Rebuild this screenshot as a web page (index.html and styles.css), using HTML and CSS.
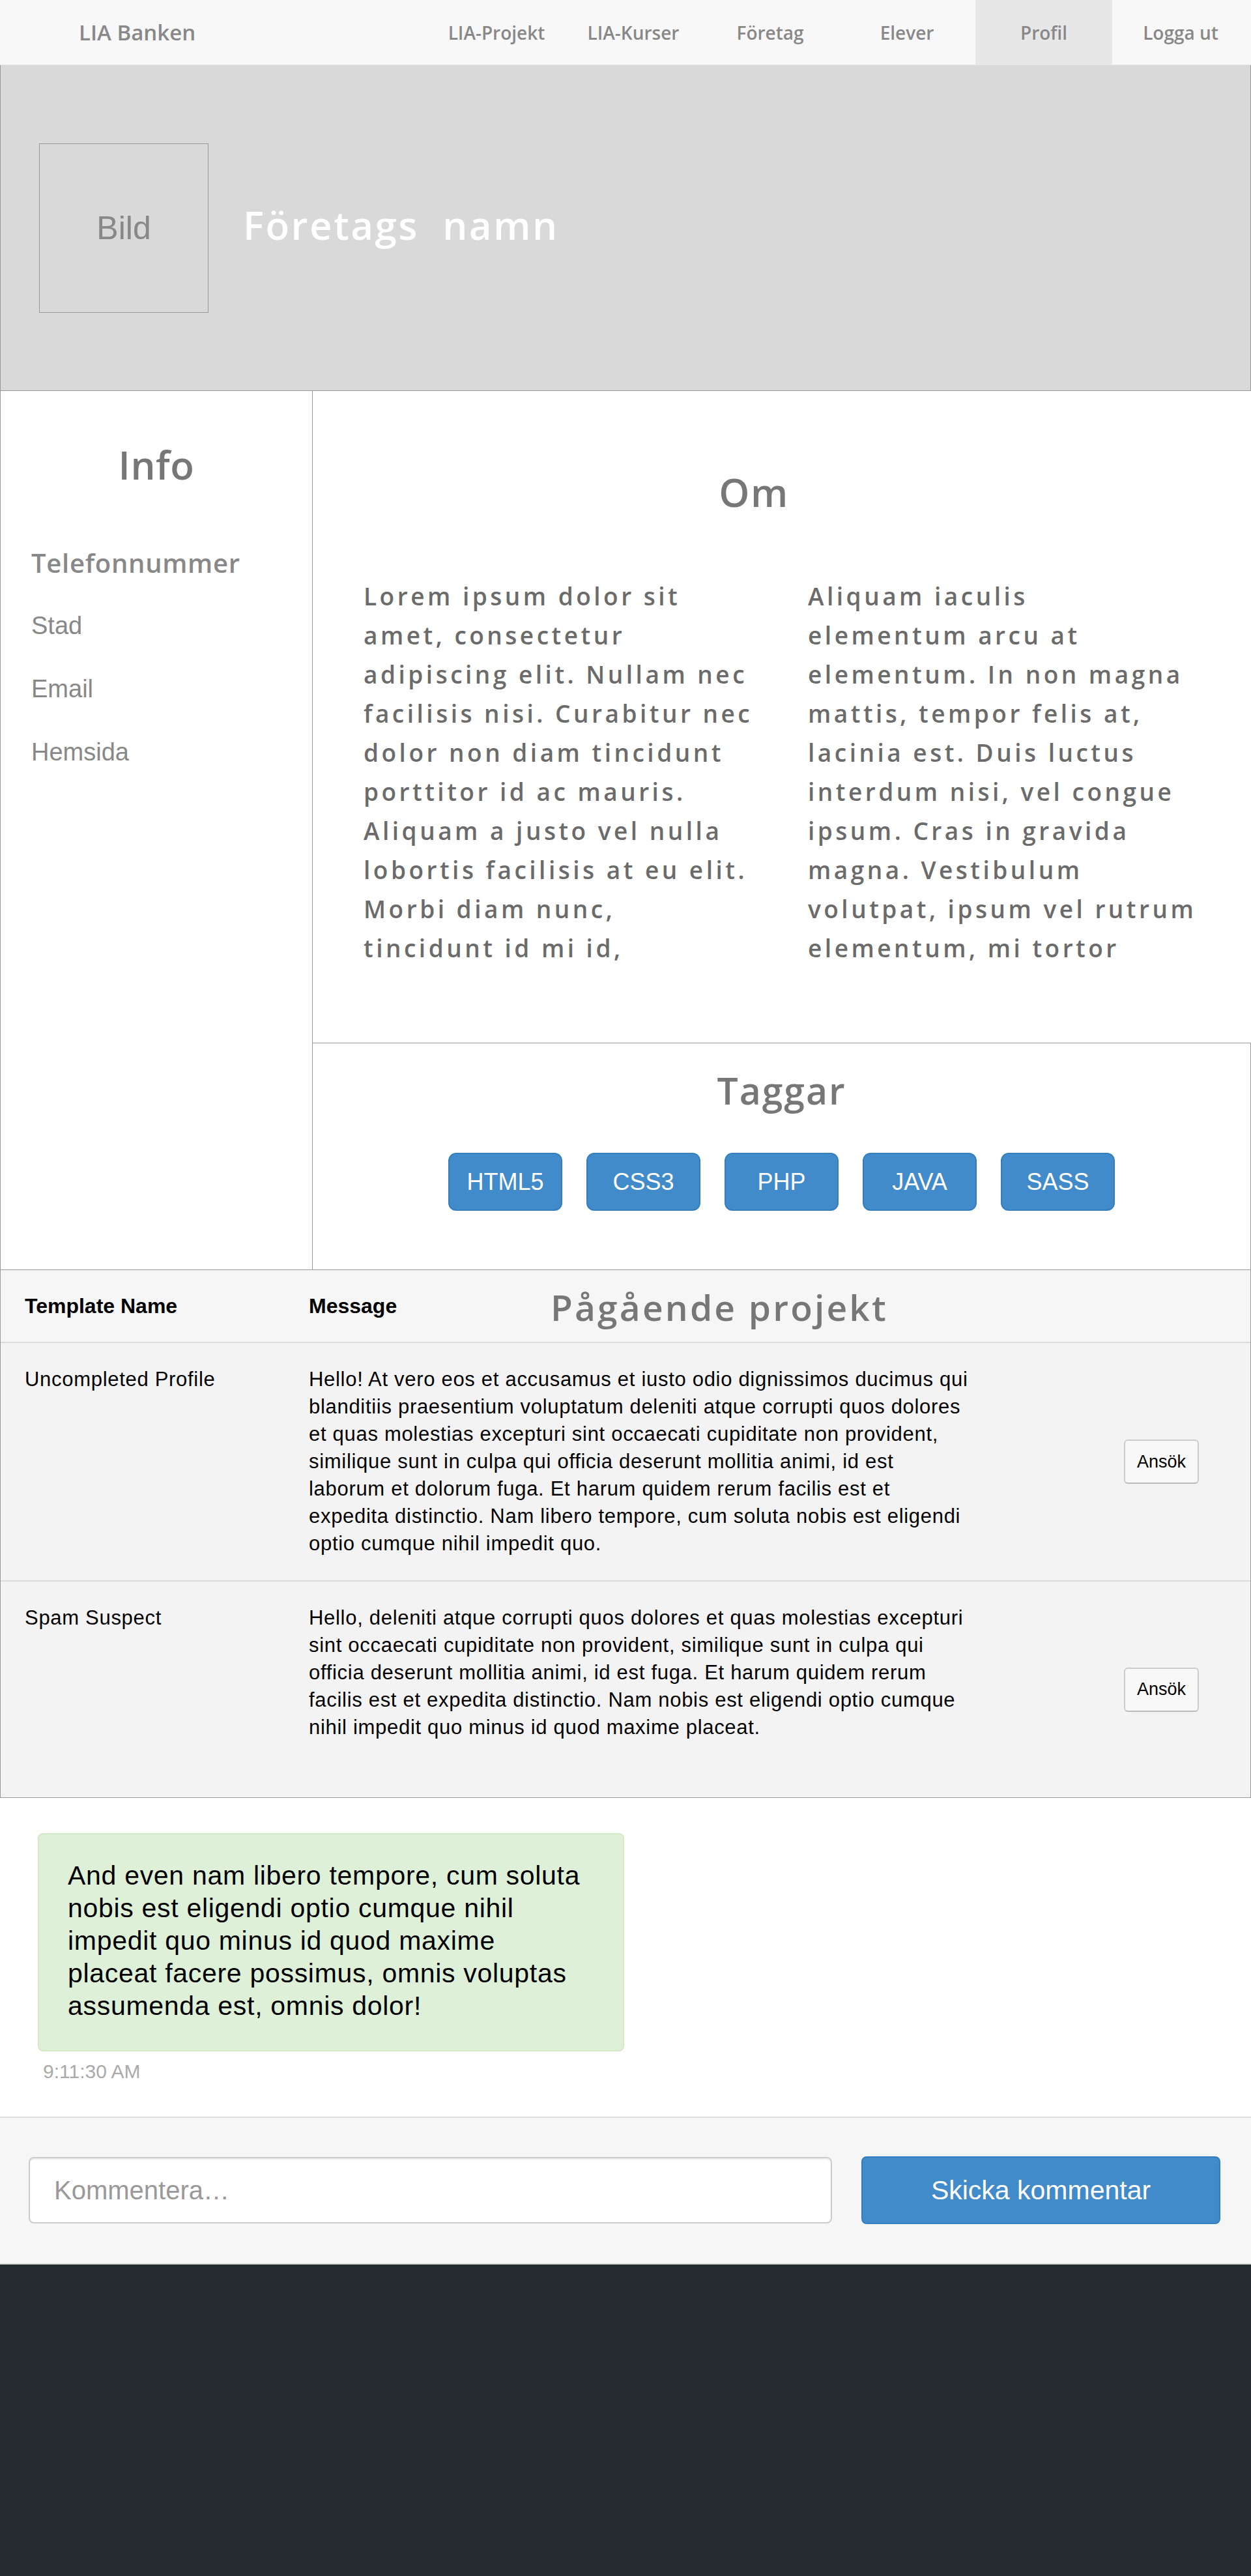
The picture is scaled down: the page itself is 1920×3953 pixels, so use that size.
FILE: index.html
```html
<!DOCTYPE html>
<html lang="sv">
<head>
<meta charset="utf-8">
<title>LIA Banken – Profil</title>
<link rel="stylesheet" href="styles.css">
</head>
<body>
<nav class="nav">
  <div class="brand">LIA Banken</div>
  <ul class="menu">
    <li>LIA-Projekt</li>
    <li>LIA-Kurser</li>
    <li>Företag</li>
    <li>Elever</li>
    <li class="active">Profil</li>
    <li>Logga ut</li>
  </ul>
</nav>

<header class="hero">
  <div class="pic">Bild</div>
  <h1 class="company">Företags  namn</h1>
</header>

<main class="main">
  <aside class="info">
    <h2 class="info-title">Info</h2>
    <ul class="info-list">
      <li class="info-strong">Telefonnummer</li>
      <li>Stad</li>
      <li>Email</li>
      <li>Hemsida</li>
    </ul>
  </aside>
  <div class="right">
    <section class="about">
      <h2 class="om-title">Om</h2>
      <div class="cols">
        <p>Lorem ipsum dolor sit<br>amet, consectetur<br>adipiscing elit. Nullam nec<br>facilisis nisi. Curabitur nec<br>dolor non diam tincidunt<br>porttitor id ac mauris.<br>Aliquam a justo vel nulla<br>lobortis facilisis at eu elit.<br>Morbi diam nunc,<br>tincidunt id mi id,</p>
        <p>Aliquam iaculis<br>elementum arcu at<br>elementum. In non magna<br>mattis, tempor felis at,<br>lacinia est. Duis luctus<br>interdum nisi, vel congue<br>ipsum. Cras in gravida<br>magna. Vestibulum<br>volutpat, ipsum vel rutrum<br>elementum, mi tortor</p>
      </div>
    </section>
    <section class="tags">
      <h2 class="tags-title">Taggar</h2>
      <div class="tag-list">
        <span class="tag">HTML5</span>
        <span class="tag">CSS3</span>
        <span class="tag">PHP</span>
        <span class="tag">JAVA</span>
        <span class="tag">SASS</span>
      </div>
    </section>
  </div>
</main>

<section class="projects">
  <div class="thead">
    <div class="th th1">Template Name</div>
    <div class="th th2">Message</div>
    <h2 class="proj-title">Pågående projekt</h2>
  </div>
  <div class="row">
    <div class="cell1">Uncompleted Profile</div>
    <div class="cell2">Hello! At vero eos et accusamus et iusto odio dignissimos ducimus qui<br>blanditiis praesentium voluptatum deleniti atque corrupti quos dolores<br>et quas molestias excepturi sint occaecati cupiditate non provident,<br>similique sunt in culpa qui officia deserunt mollitia animi, id est<br>laborum et dolorum fuga. Et harum quidem rerum facilis est et<br>expedita distinctio. Nam libero tempore, cum soluta nobis est eligendi<br>optio cumque nihil impedit quo.</div>
    <button class="apply">Ansök</button>
  </div>
  <div class="row last">
    <div class="cell1">Spam Suspect</div>
    <div class="cell2">Hello, deleniti atque corrupti quos dolores et quas molestias excepturi<br>sint occaecati cupiditate non provident, similique sunt in culpa qui<br>officia deserunt mollitia animi, id est fuga. Et harum quidem rerum<br>facilis est et expedita distinctio. Nam nobis est eligendi optio cumque<br>nihil impedit quo minus id quod maxime placeat.</div>
    <button class="apply">Ansök</button>
  </div>
</section>

<section class="chat">
  <div class="bubble">And even nam libero tempore, cum soluta<br>nobis est eligendi optio cumque nihil<br>impedit quo minus id quod maxime<br>placeat facere possimus, omnis voluptas<br>assumenda est, omnis dolor!</div>
  <div class="time">9:11:30 AM</div>
</section>

<section class="comment">
  <input class="comment-input" type="text" placeholder="Kommentera…">
  <button class="send">Skicka kommentar</button>
</section>

<footer class="footer"></footer>
</body>
</html>
```
FILE: styles.css
```css
* { box-sizing: border-box; margin: 0; padding: 0; }
body { width: 1920px; background: #fff; font-family: "Liberation Sans", Arial, sans-serif; color: #000; }

/* nav */
.nav { height: 100px; background: #f8f8f8; border-bottom: 1px solid #e7e7e7; display: flex; padding-right: 3px; }
.brand { font-family: "Open Sans", sans-serif; font-weight: 600; font-size: 33px; color: #888; display: flex; align-items: center; padding-left: 121px; }
.menu { margin-left: auto; display: flex; list-style: none; }
.menu li { width: 210px; display: flex; align-items: center; justify-content: center; font-family: "Open Sans", sans-serif; font-weight: 600; font-size: 28px; color: #888; }
.menu li.active { background: #e7e7e7; }

/* hero */
.hero { height: 500px; background: #d9d9d9; border: 1px solid #999; border-top: 0; display: flex; align-items: center; padding-left: 59px; }
.pic { width: 260px; height: 260px; border: 1px solid #999; display: flex; align-items: center; justify-content: center; font-size: 50px; color: #888; }
.company { margin-left: 53px; margin-bottom: 10px; font-family: "Open Sans", sans-serif; font-weight: 600; font-size: 60px; line-height: 60px; color: #fff; letter-spacing: 2.5px; white-space: pre; }

/* main */
.main { display: flex; }
.info { width: 480px; border-left: 1px solid #999; border-right: 1px solid #999; border-bottom: 1px solid #999; padding-top: 83px; }
.info-title { font-family: "Open Sans", sans-serif; font-weight: 600; font-size: 60px; line-height: 60px; color: #777; text-align: center; margin-bottom: 72px; letter-spacing: 0.5px; }
.info-list { list-style: none; padding-left: 47px; }
.info-list li { height: 97px; line-height: 97px; font-size: 38px; color: #888; }
.info-list li.info-strong { font-family: "Open Sans", sans-serif; font-weight: 600; font-size: 40px; letter-spacing: 0.7px; }

.right { flex: 1; display: flex; flex-direction: column; }
.about { height: 1000px; padding: 125px 0 0 78px; }
.om-title { font-family: "Open Sans", sans-serif; font-weight: 600; font-size: 60px; line-height: 60px; color: #777; text-align: center; padding-right: 164px; margin-bottom: 100px; letter-spacing: 1.5px; }
.cols { display: grid; grid-template-columns: 682px auto; }
.cols p { font-family: "Open Sans", sans-serif; font-weight: 600; font-size: 37px; line-height: 60px; color: #6b6b6b; letter-spacing: 4.5px; white-space: nowrap; }

.tags { height: 349px; border: 1px solid #999; border-left: 0; padding-top: 44px; text-align: center; }
.tags-title { font-family: "Open Sans", sans-serif; font-weight: 600; font-size: 57px; line-height: 57px; color: #777; margin-bottom: 67px; letter-spacing: 2px; }
.tag-list { display: flex; justify-content: center; gap: 37px; }
.tag { width: 175px; height: 89px; background: #428bca; border: 2px solid #357ebd; border-radius: 12px; color: #fff; font-size: 36px; display: flex; align-items: center; justify-content: center; }

/* projects */
.projects { border: 1px solid #999; border-top: 0; }
.thead { height: 112px; background: #f6f6f6; border-bottom: 2px solid #ddd; display: flex; align-items: center; padding-left: 37px; }
.th { font-weight: 700; font-size: 32px; }
.th1 { width: 436px; }
.th2 { width: 371px; }
.proj-title { font-family: "Open Sans", sans-serif; font-weight: 600; font-size: 55px; line-height: 55px; color: #777; margin-top: 2px; letter-spacing: 3.2px; }
.row { display: flex; align-items: flex-start; background: #f3f3f3; padding: 35px 0 35px 37px; border-bottom: 2px solid #ddd; font-size: 31px; line-height: 42px; letter-spacing: 0.7px; }
.row.last { border-bottom: 0; min-height: 331px; }
.cell1 { width: 436px; }
.cell2 { width: 1120px; white-space: nowrap; }
.apply { align-self: center; margin-left: auto; margin-right: 79px; width: 115px; height: 68px; background: #f8f8f8; border: 2px solid #ccc; border-bottom-color: #bbb; border-radius: 6px; font-family: "Liberation Sans", Arial, sans-serif; font-size: 27px; color: #000; }

/* chat */
.chat { padding: 54px 0 51px 58px; }
.bubble { width: 900px; background: #dff0d8; border: 2px solid #d6e9c6; border-radius: 8px; padding: 38px 44px 43px; font-size: 41px; line-height: 50px; letter-spacing: 0.7px; white-space: nowrap; color: #000; }
.time { margin-top: 13px; padding-left: 8px; font-size: 30px; line-height: 36px; color: #aaa; }

/* comment */
.comment { background: #f6f6f6; border-top: 2px solid #ddd; border-bottom: 2px solid #ddd; padding: 59px 0 60px 44px; display: flex; align-items: center; }
.comment-input { width: 1233px; height: 102px; background: #fff; border: 2px solid #ccc; border-radius: 8px; box-shadow: inset 0 2px 2px rgba(0,0,0,0.075); padding-left: 37px; font-family: "Liberation Sans", Arial, sans-serif; font-size: 40px; color: #555; outline: none; }
.comment-input::placeholder { color: #999; }
.send { margin-left: 45px; width: 551px; height: 104px; background: #428bca; border: 2px solid #357ebd; border-radius: 8px; color: #fff; font-family: "Liberation Sans", Arial, sans-serif; font-size: 41px; }

.footer { height: 481px; background: #252c30; }
```
